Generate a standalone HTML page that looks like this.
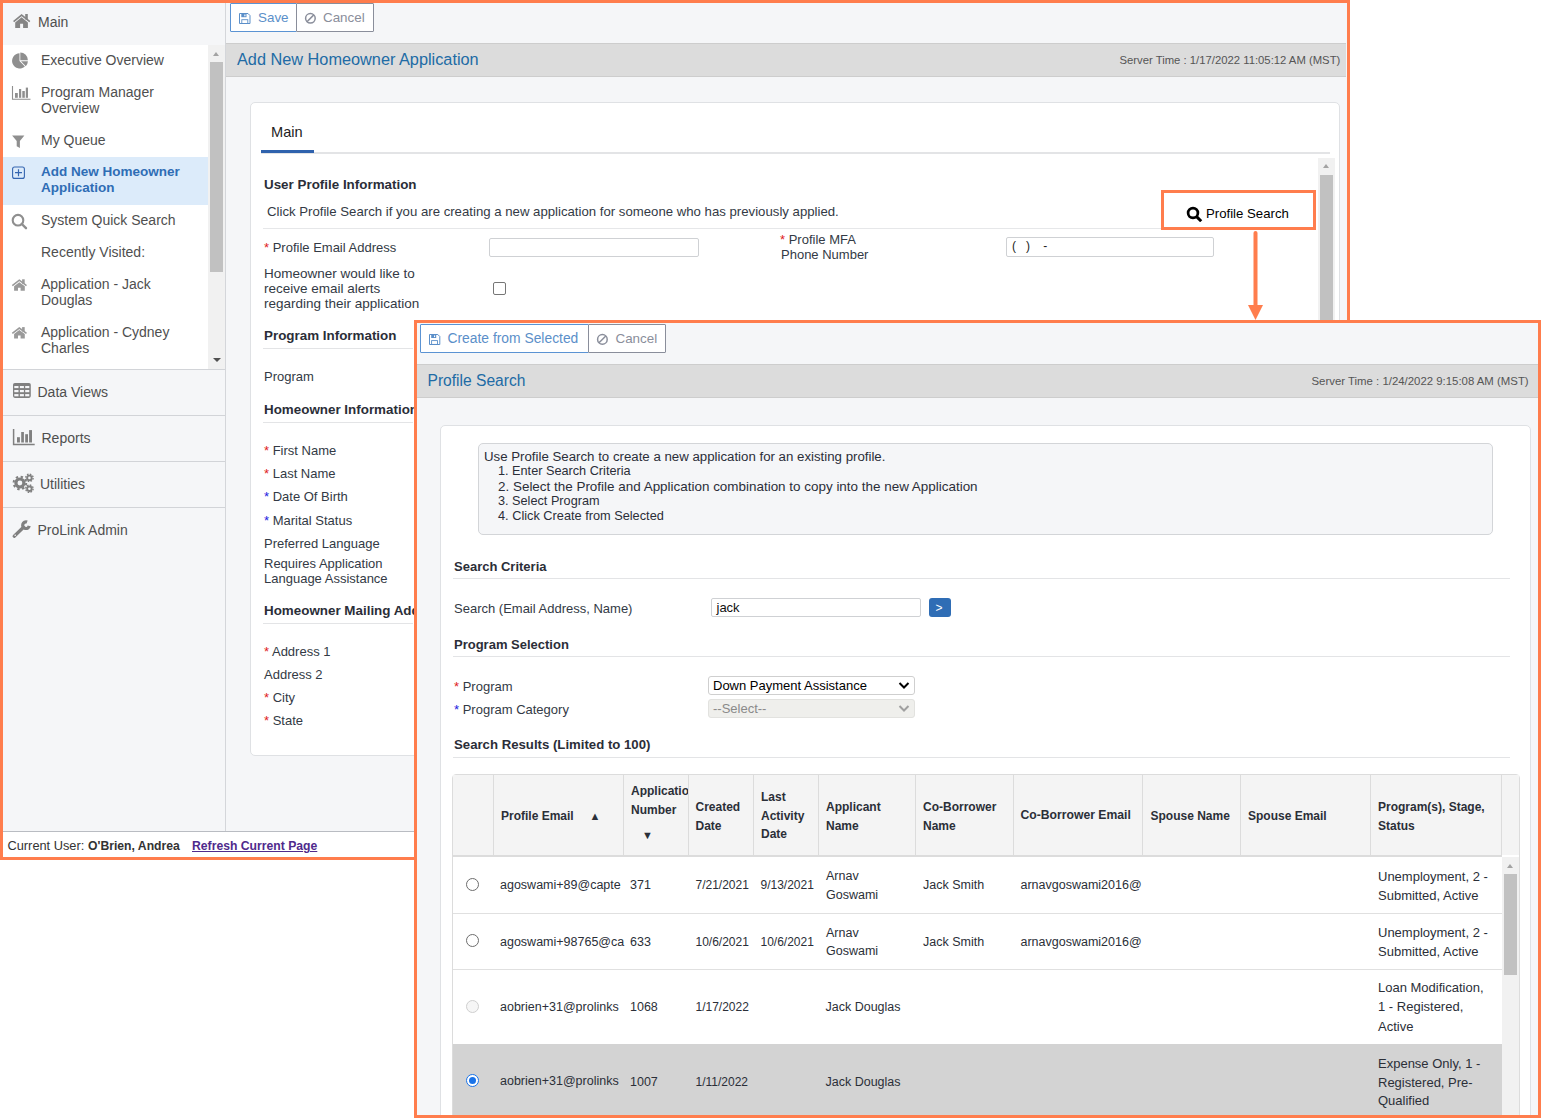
<!DOCTYPE html>
<html><head><meta charset="utf-8"><title>Profile Search</title>
<style>
html,body{margin:0;padding:0;background:#fff;}
body{width:1541px;height:1118px;position:relative;overflow:hidden;font-family:"Liberation Sans",sans-serif;}
.a{position:absolute;}
.t{white-space:nowrap;}
</style></head><body>
<div class="a" style="left:0px;top:0px;width:1350px;height:860px;background:#f5f6f8;"></div>
<div class="a" style="left:3px;top:3px;width:222px;height:42px;background:#f5f6f8;"></div>
<div class="a" style="left:3px;top:45px;width:205px;height:324px;background:#fff;"></div>
<div class="a" style="left:208px;top:45px;width:17px;height:324px;background:#f1f1f1;"></div>
<div class="a" style="left:210px;top:62px;width:13px;height:210px;background:#c1c1c1;"></div>
<div class="a" style="left:213px;top:52px;width:0;height:0;border-left:3.5px solid transparent;border-right:3.5px solid transparent;border-bottom:4px solid #a3a3a3"></div>
<div class="a" style="left:212.5px;top:358px;width:0;height:0;border-left:4px solid transparent;border-right:4px solid transparent;border-top:4.5px solid #505050"></div>
<div class="a" style="left:3px;top:157px;width:205px;height:48px;background:#dcebfa;"></div>
<div class="a" style="left:3px;top:369px;width:222px;height:1px;background:#d2d4d8;"></div>
<div class="a" style="left:3px;top:415px;width:222px;height:1px;background:#d2d4d8;"></div>
<div class="a" style="left:3px;top:461px;width:222px;height:1px;background:#d2d4d8;"></div>
<div class="a" style="left:3px;top:507px;width:222px;height:1px;background:#d2d4d8;"></div>
<div class="a" style="left:225px;top:3px;width:1px;height:828px;background:#d4d6da;"></div>
<div class="a" style="left:3px;top:831px;width:1343px;height:1px;background:#b9bcc2;"></div>
<div class="a" style="left:3px;top:832px;width:1343px;height:25px;background:#fff;"></div>
<div class="a t" style="left:38px;top:14.5px;font-size:14px;line-height:14px;font-weight:400;color:#4f4f4f;">Main</div>
<div class="a t" style="left:41px;top:52.5px;font-size:14px;line-height:14px;font-weight:400;color:#4f4f4f;">Executive Overview</div>
<div class="a t" style="left:41px;top:85.0px;font-size:14px;line-height:14px;font-weight:400;color:#4f4f4f;">Program Manager</div>
<div class="a t" style="left:41px;top:101.0px;font-size:14px;line-height:14px;font-weight:400;color:#4f4f4f;">Overview</div>
<div class="a t" style="left:41px;top:132.5px;font-size:14px;line-height:14px;font-weight:400;color:#4f4f4f;">My Queue</div>
<div class="a t" style="left:41px;top:165.1px;font-size:13.5px;line-height:13.5px;font-weight:700;color:#2f6db5;">Add New Homeowner</div>
<div class="a t" style="left:41px;top:181.1px;font-size:13.5px;line-height:13.5px;font-weight:700;color:#2f6db5;">Application</div>
<div class="a t" style="left:41px;top:213.0px;font-size:14px;line-height:14px;font-weight:400;color:#4f4f4f;">System Quick Search</div>
<div class="a t" style="left:41px;top:245.0px;font-size:14px;line-height:14px;font-weight:400;color:#4f4f4f;">Recently Visited:</div>
<div class="a t" style="left:41px;top:277.0px;font-size:14px;line-height:14px;font-weight:400;color:#4f4f4f;">Application - Jack</div>
<div class="a t" style="left:41px;top:293.0px;font-size:14px;line-height:14px;font-weight:400;color:#4f4f4f;">Douglas</div>
<div class="a t" style="left:41px;top:325.0px;font-size:14px;line-height:14px;font-weight:400;color:#4f4f4f;">Application - Cydney</div>
<div class="a t" style="left:41px;top:341.0px;font-size:14px;line-height:14px;font-weight:400;color:#4f4f4f;">Charles</div>
<div class="a t" style="left:37.5px;top:385.0px;font-size:14px;line-height:14px;font-weight:400;color:#4f4f4f;">Data Views</div>
<div class="a t" style="left:41.5px;top:431.0px;font-size:14px;line-height:14px;font-weight:400;color:#4f4f4f;">Reports</div>
<div class="a t" style="left:40px;top:477.0px;font-size:14px;line-height:14px;font-weight:400;color:#4f4f4f;">Utilities</div>
<div class="a t" style="left:37.5px;top:522.5px;font-size:14px;line-height:14px;font-weight:400;color:#4f4f4f;">ProLink Admin</div>
<div class="a t" style="left:7.5px;top:839.9px;font-size:12.8px;line-height:12.8px;font-weight:400;color:#333;">Current User:</div>
<div class="a t" style="left:88px;top:840.2px;font-size:12.2px;line-height:12.2px;font-weight:700;color:#333;">O'Brien, Andrea</div>
<div class="a t" style="left:192px;top:840.2px;font-size:12.2px;line-height:12.2px;font-weight:700;color:#4f2a8c;text-decoration:underline;">Refresh Current Page</div>
<div class="a" style="left:230px;top:3px;width:67px;height:29px;background:#fff;border:1px solid #5b93d3;box-sizing:border-box;border-radius:1px;"></div>
<div class="a" style="left:296px;top:3px;width:78px;height:29px;background:#fff;border:1px solid #8a8e9b;box-sizing:border-box;border-radius:1px;"></div>
<div class="a t" style="left:258px;top:11.3px;font-size:13.4px;line-height:13.4px;font-weight:400;color:#5b8fc9;">Save</div>
<div class="a t" style="left:323px;top:11.3px;font-size:13.4px;line-height:13.4px;font-weight:400;color:#8a8e9b;">Cancel</div>
<div class="a" style="left:226px;top:43px;width:1120px;height:34px;background:#dcdcdc;border-top:1px solid #cdcdcd;border-bottom:1px solid #cdcdcd;box-sizing:border-box;"></div>
<div class="a t" style="left:237px;top:51.4px;font-size:16.3px;line-height:16.3px;font-weight:400;color:#216ba5;">Add New Homeowner Application</div>
<div class="a t" style="left:1119.5px;top:54.6px;font-size:11.3px;line-height:11.3px;font-weight:400;color:#555;">Server Time : 1/17/2022 11:05:12 AM (MST)</div>
<div class="a" style="left:250px;top:102px;width:1090px;height:654px;background:#fff;border:1px solid #dfe1e4;box-sizing:border-box;border-radius:5px;"></div>
<div class="a t" style="left:271px;top:125.0px;font-size:14.6px;line-height:14.6px;font-weight:400;color:#222;">Main</div>
<div class="a" style="left:261px;top:152px;width:1069px;height:2px;background:#e3e4e6;"></div>
<div class="a" style="left:261px;top:150px;width:53px;height:2.5px;background:#2f62ad;"></div>
<div class="a" style="left:1318px;top:158px;width:17px;height:600px;background:#f1f1f1;"></div>
<div class="a" style="left:1320px;top:175px;width:13px;height:600px;background:#c1c1c1;"></div>
<div class="a" style="left:1323px;top:164px;width:0;height:0;border-left:3.5px solid transparent;border-right:3.5px solid transparent;border-bottom:4px solid #a3a3a3"></div>
<div class="a t" style="left:264px;top:178.3px;font-size:13.4px;line-height:13.4px;font-weight:700;color:#2b2e38;">User Profile Information</div>
<div class="a t" style="left:267px;top:204.9px;font-size:13.2px;line-height:13.2px;font-weight:400;color:#333a45;">Click Profile Search if you are creating a new application for someone who has previously applied.</div>
<div class="a" style="left:263px;top:228px;width:1050px;height:1px;background:#e6e7e9;"></div>
<div class="a t" style="left:264px;top:241.0px;font-size:13px;line-height:13px;font-weight:400;color:#333a45;"><span style="color:#e02020">*</span> Profile Email Address</div>
<div class="a" style="left:489px;top:238px;width:210px;height:19px;background:#fff;border:1px solid #cfd1d4;box-sizing:border-box;border-radius:2px;"></div>
<div class="a t" style="left:780px;top:233.0px;font-size:13px;line-height:13px;font-weight:400;color:#333a45;"><span style="color:#e02020">*</span> Profile MFA</div>
<div class="a t" style="left:781px;top:248.0px;font-size:13px;line-height:13px;font-weight:400;color:#333a45;">Phone Number</div>
<div class="a" style="left:1006px;top:237px;width:208px;height:20px;background:#fff;border:1px solid #cfd1d4;box-sizing:border-box;border-radius:2px;"></div>
<div class="a t" style="left:1012px;top:240.0px;font-size:12px;line-height:12px;font-weight:400;color:#222;">(&nbsp;&nbsp;&nbsp;)&nbsp;&nbsp;&nbsp;&nbsp;-</div>
<div class="a t" style="left:264px;top:267.1px;font-size:13.5px;line-height:13.5px;font-weight:400;color:#333a45;">Homeowner would like to</div>
<div class="a t" style="left:264px;top:282.1px;font-size:13.5px;line-height:13.5px;font-weight:400;color:#333a45;">receive email alerts</div>
<div class="a t" style="left:264px;top:297.1px;font-size:13.5px;line-height:13.5px;font-weight:400;color:#333a45;">regarding their application</div>
<div class="a" style="left:493px;top:282px;width:13px;height:13px;background:#fff;border:1px solid #767676;box-sizing:border-box;border-radius:2px;"></div>
<div class="a t" style="left:264px;top:329.3px;font-size:13.4px;line-height:13.4px;font-weight:700;color:#2b2e38;">Program Information</div>
<div class="a" style="left:263px;top:348px;width:150px;height:1px;background:#e3e4e6;"></div>
<div class="a t" style="left:264px;top:370.0px;font-size:13px;line-height:13px;font-weight:400;color:#333a45;">Program</div>
<div class="a t" style="left:264px;top:403.3px;font-size:13.4px;line-height:13.4px;font-weight:700;color:#2b2e38;">Homeowner Information</div>
<div class="a" style="left:263px;top:422px;width:150px;height:1px;background:#e3e4e6;"></div>
<div class="a t" style="left:264px;top:444.0px;font-size:13px;line-height:13px;font-weight:400;color:#333a45;"><span style="color:#e02020">*</span> First Name</div>
<div class="a t" style="left:264px;top:467.0px;font-size:13px;line-height:13px;font-weight:400;color:#333a45;"><span style="color:#e02020">*</span> Last Name</div>
<div class="a t" style="left:264px;top:490.0px;font-size:13px;line-height:13px;font-weight:400;color:#333a45;"><span style="color:#2020e0">*</span> Date Of Birth</div>
<div class="a t" style="left:264px;top:514.0px;font-size:13px;line-height:13px;font-weight:400;color:#333a45;"><span style="color:#2020e0">*</span> Marital Status</div>
<div class="a t" style="left:264px;top:537.0px;font-size:13px;line-height:13px;font-weight:400;color:#333a45;">Preferred Language</div>
<div class="a t" style="left:264px;top:557.0px;font-size:13px;line-height:13px;font-weight:400;color:#333a45;">Requires Application</div>
<div class="a t" style="left:264px;top:572.0px;font-size:13px;line-height:13px;font-weight:400;color:#333a45;">Language Assistance</div>
<div class="a t" style="left:264px;top:604.3px;font-size:13.4px;line-height:13.4px;font-weight:700;color:#2b2e38;">Homeowner Mailing Address</div>
<div class="a" style="left:263px;top:623px;width:150px;height:1px;background:#e3e4e6;"></div>
<div class="a t" style="left:264px;top:645.0px;font-size:13px;line-height:13px;font-weight:400;color:#333a45;"><span style="color:#e02020">*</span> Address 1</div>
<div class="a t" style="left:264px;top:668.0px;font-size:13px;line-height:13px;font-weight:400;color:#333a45;">Address 2</div>
<div class="a t" style="left:264px;top:691.0px;font-size:13px;line-height:13px;font-weight:400;color:#333a45;"><span style="color:#e02020">*</span> City</div>
<div class="a t" style="left:264px;top:714.0px;font-size:13px;line-height:13px;font-weight:400;color:#333a45;"><span style="color:#e02020">*</span> State</div>
<svg class="a" style="left:0;top:0" width="1541" height="1118" viewBox="0 0 1541 1118"><path d="M13.6 21.6 L21.6 15 L29.8 21.6" stroke="#858585" stroke-width="1.7" fill="none" stroke-linejoin="miter"/><path d="M15.2 22.4 L21.6 17.3 L27.9 22.4 L27.9 28 L23.1 28 L23.1 23.8 L20.1 23.8 L20.1 28 L15.2 28 Z" fill="#858585"/><rect x="25.2" y="14" width="2.6" height="5.5" fill="#858585"/><path d="M19.5 61 L19.5 53.3 A7.6 7.6 0 1 0 24.9 66.4 Z" fill="#8f8f8f"/><path d="M20.3 60.2 L20.3 52.6 A7.6 7.6 0 0 1 27.9 60.2 Z" fill="#8f8f8f"/><path d="M21 61.3 L27.9 61.3 A7.2 7.2 0 0 1 25.8 66.2 Z" fill="#8f8f8f"/><path d="M12.5 86 L12.5 99.2 L30.5 99.2" stroke="#8f8f8f" stroke-width="1.1" fill="none"/><rect x="15" y="93" width="2.8000000000000007" height="4.799999999999997" fill="#8f8f8f"/><rect x="19" y="89" width="2.1999999999999993" height="8.799999999999997" fill="#8f8f8f"/><rect x="22.3" y="91" width="2.5" height="6.799999999999997" fill="#8f8f8f"/><rect x="25.8" y="87.6" width="2.1999999999999993" height="10.200000000000003" fill="#8f8f8f"/><path d="M12.1 135.5 L24.4 135.5 L19.9 141 L19.9 148 L16.7 146.3 L16.7 141 Z" fill="#8f8f8f"/><rect x="12.6" y="167" width="11.8" height="11.4" rx="2" stroke="#3566b0" stroke-width="1.1" fill="none"/><path d="M18.5 169.2 L18.5 176.2 M15 172.7 L22 172.7" stroke="#3566b0" stroke-width="1.2"/><circle cx="18" cy="220.2" r="5.3" stroke="#8f8f8f" stroke-width="2.1" fill="none"/><path d="M21.8 224 L26 228.2" stroke="#8f8f8f" stroke-width="2.4" stroke-linecap="round"/><g transform="translate(0 0)"><path d="M12.3 285.6 L19.3 280.2 L26.5 285.6" stroke="#9a9a9a" stroke-width="1.6" fill="none"/><path d="M14.1 286.3 L19.3 282.3 L24.8 286.3 L24.8 290.8 L20.6 290.8 L20.6 287.8 L18 287.8 L18 290.8 L14.1 290.8 Z" fill="#9a9a9a"/><rect x="22.1" y="279.3" width="2.6" height="4.5" fill="#9a9a9a"/></g><g transform="translate(0 47.8)"><path d="M12.3 285.6 L19.3 280.2 L26.5 285.6" stroke="#9a9a9a" stroke-width="1.6" fill="none"/><path d="M14.1 286.3 L19.3 282.3 L24.8 286.3 L24.8 290.8 L20.6 290.8 L20.6 287.8 L18 287.8 L18 290.8 L14.1 290.8 Z" fill="#9a9a9a"/><rect x="22.1" y="279.3" width="2.6" height="4.5" fill="#9a9a9a"/></g><rect x="13" y="383" width="17.8" height="14.9" rx="1.8" fill="#808080"/><rect x="14.3" y="386" width="4.2" height="2.1" fill="#f5f6f8"/><rect x="14.3" y="390" width="4.2" height="2.2" fill="#f5f6f8"/><rect x="14.3" y="394.1" width="4.2" height="2.2" fill="#f5f6f8"/><rect x="19.9" y="386" width="4.0" height="2.1" fill="#f5f6f8"/><rect x="19.9" y="390" width="4.0" height="2.2" fill="#f5f6f8"/><rect x="19.9" y="394.1" width="4.0" height="2.2" fill="#f5f6f8"/><rect x="25.2" y="386" width="4.1" height="2.1" fill="#f5f6f8"/><rect x="25.2" y="390" width="4.1" height="2.2" fill="#f5f6f8"/><rect x="25.2" y="394.1" width="4.1" height="2.2" fill="#f5f6f8"/><path d="M13.6 429 L13.6 444.5 L34.7 444.5" stroke="#808080" stroke-width="1.5" fill="none"/><rect x="17" y="437.2" width="2.9" height="5.3" fill="#808080"/><rect x="21.2" y="432" width="2.7" height="10.5" fill="#808080"/><rect x="25.2" y="434.2" width="2.8" height="8.3" fill="#808080"/><rect x="29.1" y="430.1" width="2.9" height="12.4" fill="#808080"/><circle cx="19.9" cy="483" r="5.6" fill="#808080"/><circle cx="19.9" cy="483" r="6.3" stroke="#808080" stroke-width="2" fill="none" stroke-dasharray="2.4 2.55"/><circle cx="19.9" cy="483" r="2.4" fill="#f5f6f8"/><circle cx="29.4" cy="477.9" r="3.2" fill="#808080"/><circle cx="29.4" cy="477.9" r="3.7" stroke="#808080" stroke-width="1.4" fill="none" stroke-dasharray="1.6 1.3"/><circle cx="29.4" cy="477.9" r="1.3" fill="#f5f6f8"/><circle cx="29.4" cy="488.7" r="3.2" fill="#808080"/><circle cx="29.4" cy="488.7" r="3.7" stroke="#808080" stroke-width="1.4" fill="none" stroke-dasharray="1.6 1.3"/><circle cx="29.4" cy="488.7" r="1.3" fill="#f5f6f8"/><path d="M14.2 536.2 L23.5 527.3" stroke="#808080" stroke-width="3.3" stroke-linecap="round"/><path d="M27.1 522.1 A3.3 3.3 0 1 0 29.2 525.9" stroke="#808080" stroke-width="3.2" fill="none"/><circle cx="15.2" cy="535.3" r="0.8" fill="#f5f6f8"/><path d="M239.5 13.5 L248 13.5 L250 15.6 L250 23.5 L239.5 23.5 Z" stroke="#5b8fc9" stroke-width="1" fill="none"/><rect x="241.3" y="14" width="5.2" height="3.2" fill="#5b8fc9"/><rect x="244.3" y="14.5" width="1.2" height="1.8" fill="#fff"/><rect x="241.8" y="19.7" width="6" height="3.8" stroke="#5b8fc9" stroke-width="0.9" fill="none"/><circle cx="310.4" cy="18.3" r="4.8" stroke="#8a8e9b" stroke-width="1.5" fill="none"/><path d="M313.8 14.9 L307 21.7" stroke="#8a8e9b" stroke-width="1.5"/></svg>
<div class="a" style="left:0px;top:0px;width:1350px;height:860px;border:3px solid #ff7d4d;box-sizing:border-box;"></div>
<div class="a" style="left:414px;top:320px;width:1127px;height:798px;background:#f5f6f8;"></div>
<div class="a" style="left:420px;top:324px;width:169px;height:29px;background:#fff;border:1px solid #5b93d3;box-sizing:border-box;border-radius:1px;"></div>
<div class="a" style="left:588px;top:324px;width:78px;height:29px;background:#fff;border:1px solid #8a8e9b;box-sizing:border-box;border-radius:1px;"></div>
<div class="a t" style="left:447.5px;top:332.1px;font-size:13.85px;line-height:13.85px;font-weight:400;color:#5b8fc9;">Create from Selected</div>
<div class="a t" style="left:615.5px;top:332.3px;font-size:13.4px;line-height:13.4px;font-weight:400;color:#8a8e9b;">Cancel</div>
<div class="a" style="left:417px;top:364px;width:1121px;height:34px;background:#dcdcdc;border-top:1px solid #cdcdcd;border-bottom:1px solid #cdcdcd;box-sizing:border-box;"></div>
<div class="a t" style="left:427.5px;top:372.7px;font-size:15.6px;line-height:15.6px;font-weight:400;color:#216ba5;">Profile Search</div>
<div class="a t" style="left:1311.5px;top:376.0px;font-size:11.4px;line-height:11.4px;font-weight:400;color:#555;">Server Time : 1/24/2022 9:15:08 AM (MST)</div>
<div class="a" style="left:440px;top:425px;width:1091px;height:720px;background:#fff;border:1px solid #dfe1e4;box-sizing:border-box;border-radius:5px;"></div>
<div class="a" style="left:478px;top:443px;width:1015px;height:92px;background:#f5f6f8;border:1px solid #d3d5d8;box-sizing:border-box;border-radius:5px;"></div>
<div class="a t" style="left:484px;top:449.9px;font-size:13.25px;line-height:13.25px;font-weight:400;color:#2b2e38;">Use Profile Search to create a new application for an existing profile.</div>
<div class="a t" style="left:498px;top:465.1px;font-size:12.7px;line-height:12.7px;font-weight:400;color:#2b2e38;">1. Enter Search Criteria</div>
<div class="a t" style="left:498px;top:479.8px;font-size:13.45px;line-height:13.45px;font-weight:400;color:#2b2e38;">2. Select the Profile and Application combination to copy into the new Application</div>
<div class="a t" style="left:498px;top:495.1px;font-size:12.7px;line-height:12.7px;font-weight:400;color:#2b2e38;">3. Select Program</div>
<div class="a t" style="left:498px;top:510.1px;font-size:12.75px;line-height:12.75px;font-weight:400;color:#2b2e38;">4. Click Create from Selected</div>
<div class="a t" style="left:454px;top:559.5px;font-size:13px;line-height:13px;font-weight:700;color:#2b2e38;">Search Criteria</div>
<div class="a" style="left:453px;top:578px;width:1057px;height:1px;background:#e3e4e6;"></div>
<div class="a t" style="left:454px;top:601.5px;font-size:13px;line-height:13px;font-weight:400;color:#333a45;">Search (Email Address, Name)</div>
<div class="a" style="left:711px;top:598px;width:210px;height:19px;background:#fff;border:1px solid #cfd1d4;box-sizing:border-box;border-radius:2px;"></div>
<div class="a t" style="left:716.5px;top:601.0px;font-size:13px;line-height:13px;font-weight:400;color:#111;">jack</div>
<div class="a" style="left:929px;top:598px;width:22px;height:19px;background:#2f6db5;border-radius:3px;"></div>
<div class="a t" style="left:935.5px;top:601.5px;font-size:12px;line-height:12px;font-weight:400;color:#fff;">&gt;</div>
<div class="a t" style="left:454px;top:637.5px;font-size:13px;line-height:13px;font-weight:700;color:#2b2e38;">Program Selection</div>
<div class="a" style="left:453px;top:656px;width:1057px;height:1px;background:#e3e4e6;"></div>
<div class="a t" style="left:454px;top:680.0px;font-size:13px;line-height:13px;font-weight:400;color:#333a45;"><span style="color:#e02020">*</span> Program</div>
<div class="a" style="left:708px;top:676px;width:207px;height:19px;background:#fff;border:1px solid #cfcfcf;box-sizing:border-box;border-radius:3px;"></div>
<div class="a t" style="left:713px;top:679.0px;font-size:13px;line-height:13px;font-weight:400;color:#000;">Down Payment Assistance</div>
<div class="a t" style="left:454px;top:703.0px;font-size:13px;line-height:13px;font-weight:400;color:#333a45;"><span style="color:#2020e0">*</span> Program Category</div>
<div class="a" style="left:708px;top:699px;width:207px;height:19px;background:#efefec;border:1px solid #e2e2df;box-sizing:border-box;border-radius:3px;"></div>
<div class="a t" style="left:713px;top:702.0px;font-size:13px;line-height:13px;font-weight:400;color:#8a8a8a;">--Select--</div>
<svg class="a" style="left:898px;top:681px" width="12" height="9" viewBox="0 0 12 9"><path d="M1.5 2 L6 6.5 L10.5 2" stroke="#000" stroke-width="2" fill="none"/></svg>
<svg class="a" style="left:898px;top:704px" width="12" height="9" viewBox="0 0 12 9"><path d="M1.5 2 L6 6.5 L10.5 2" stroke="#a0a0a0" stroke-width="2" fill="none"/></svg>
<div class="a t" style="left:454px;top:738.4px;font-size:13.2px;line-height:13.2px;font-weight:700;color:#2b2e38;">Search Results (Limited to 100)</div>
<div class="a" style="left:453px;top:757px;width:1057px;height:1px;background:#e3e4e6;"></div>
<div class="a" style="left:452px;top:774px;width:1068px;height:400px;background:#fff;border:1px solid #dcdcdc;box-sizing:border-box;border-radius:4px;"></div>
<div class="a" style="left:453px;top:775px;width:1066px;height:80px;background:#f4f4f4;"></div>
<div class="a" style="left:453px;top:855px;width:1049px;height:2px;background:#dcdcdc;"></div>
<div class="a" style="left:493px;top:775px;width:1px;height:80px;background:#dcdcdc;"></div>
<div class="a" style="left:623px;top:775px;width:1px;height:80px;background:#dcdcdc;"></div>
<div class="a" style="left:688px;top:775px;width:1px;height:80px;background:#dcdcdc;"></div>
<div class="a" style="left:753px;top:775px;width:1px;height:80px;background:#dcdcdc;"></div>
<div class="a" style="left:818px;top:775px;width:1px;height:80px;background:#dcdcdc;"></div>
<div class="a" style="left:915px;top:775px;width:1px;height:80px;background:#dcdcdc;"></div>
<div class="a" style="left:1013px;top:775px;width:1px;height:80px;background:#dcdcdc;"></div>
<div class="a" style="left:1142px;top:775px;width:1px;height:80px;background:#dcdcdc;"></div>
<div class="a" style="left:1240px;top:775px;width:1px;height:80px;background:#dcdcdc;"></div>
<div class="a" style="left:1370px;top:775px;width:1px;height:80px;background:#dcdcdc;"></div>
<div class="a" style="left:1501px;top:775px;width:1px;height:80px;background:#dcdcdc;"></div>
<div class="a t" style="left:501px;top:809.5px;font-size:12px;line-height:12px;font-weight:700;color:#2b2f38;">Profile Email</div>
<div class="a t" style="left:589.5px;top:810.5px;font-size:11px;line-height:11px;font-weight:400;color:#2b2f38;">&#9650;</div>
<div class="a t" style="left:631px;top:785.0px;font-size:12px;line-height:12px;font-weight:700;color:#2b2f38;width:56.5px;overflow:hidden;">Application</div>
<div class="a t" style="left:631px;top:803.5px;font-size:12px;line-height:12px;font-weight:700;color:#2b2f38;">Number</div>
<div class="a t" style="left:642px;top:829.5px;font-size:11px;line-height:11px;font-weight:400;color:#2b2f38;">&#9660;</div>
<div class="a t" style="left:695.5px;top:800.5px;font-size:12px;line-height:12px;font-weight:700;color:#2b2f38;">Created</div>
<div class="a t" style="left:695.5px;top:819.5px;font-size:12px;line-height:12px;font-weight:700;color:#2b2f38;">Date</div>
<div class="a t" style="left:761px;top:791.0px;font-size:12px;line-height:12px;font-weight:700;color:#2b2f38;">Last</div>
<div class="a t" style="left:761px;top:809.5px;font-size:12px;line-height:12px;font-weight:700;color:#2b2f38;">Activity</div>
<div class="a t" style="left:761px;top:828.0px;font-size:12px;line-height:12px;font-weight:700;color:#2b2f38;">Date</div>
<div class="a t" style="left:826px;top:800.5px;font-size:12px;line-height:12px;font-weight:700;color:#2b2f38;">Applicant</div>
<div class="a t" style="left:826px;top:819.5px;font-size:12px;line-height:12px;font-weight:700;color:#2b2f38;">Name</div>
<div class="a t" style="left:923px;top:800.5px;font-size:12px;line-height:12px;font-weight:700;color:#2b2f38;">Co-Borrower</div>
<div class="a t" style="left:923px;top:819.5px;font-size:12px;line-height:12px;font-weight:700;color:#2b2f38;">Name</div>
<div class="a t" style="left:1020.5px;top:809.4px;font-size:12.2px;line-height:12.2px;font-weight:700;color:#2b2f38;">Co-Borrower Email</div>
<div class="a t" style="left:1150.5px;top:809.5px;font-size:12px;line-height:12px;font-weight:700;color:#2b2f38;">Spouse Name</div>
<div class="a t" style="left:1248px;top:809.5px;font-size:12px;line-height:12px;font-weight:700;color:#2b2f38;">Spouse Email</div>
<div class="a t" style="left:1378px;top:800.5px;font-size:12px;line-height:12px;font-weight:700;color:#2b2f38;">Program(s), Stage,</div>
<div class="a t" style="left:1378px;top:819.5px;font-size:12px;line-height:12px;font-weight:700;color:#2b2f38;">Status</div>
<div class="a" style="left:453px;top:913px;width:1049px;height:1px;background:#e0e0e0;"></div>
<div class="a" style="left:453px;top:969px;width:1049px;height:1px;background:#e0e0e0;"></div>
<div class="a" style="left:453px;top:1044px;width:1049px;height:80px;background:#d3d3d3;"></div>
<div class="a" style="left:1502px;top:857px;width:17px;height:300px;background:#f1f1f1;"></div>
<div class="a" style="left:1504px;top:874px;width:13px;height:101px;background:#c1c1c1;"></div>
<div class="a" style="left:1507px;top:864px;width:0;height:0;border-left:3.5px solid transparent;border-right:3.5px solid transparent;border-bottom:4px solid #a3a3a3"></div>
<div class="a" style="left:466.0px;top:878.0px;width:13px;height:13px;border:1px solid #6d6d6d;box-sizing:border-box;border-radius:50%;background:#fff"></div>
<div class="a" style="left:466.0px;top:934.0px;width:13px;height:13px;border:1px solid #6d6d6d;box-sizing:border-box;border-radius:50%;background:#fff"></div>
<div class="a" style="left:466.0px;top:999.5px;width:13px;height:13px;border:1px solid #cfcfcf;box-sizing:border-box;border-radius:50%;background:#f6f6f6"></div>
<div class="a" style="left:466.0px;top:1074.0px;width:13px;height:13px;border:1px solid #1a73e8;box-sizing:border-box;border-radius:50%;background:#fff"></div>
<div class="a" style="left:469.0px;top:1077.0px;width:7px;height:7px;border-radius:50%;background:#1a73e8"></div>
<div class="a t" style="left:500px;top:879.0px;font-size:12.5px;line-height:12.5px;font-weight:400;color:#2b2f38;">agoswami+89@capte</div>
<div class="a t" style="left:500px;top:935.5px;font-size:12.5px;line-height:12.5px;font-weight:400;color:#2b2f38;">agoswami+98765@ca</div>
<div class="a t" style="left:500px;top:1000.5px;font-size:12.5px;line-height:12.5px;font-weight:400;color:#2b2f38;width:123px;overflow:hidden;">aobrien+31@prolinks</div>
<div class="a t" style="left:500px;top:1075.0px;font-size:12.5px;line-height:12.5px;font-weight:400;color:#2b2f38;width:123px;overflow:hidden;">aobrien+31@prolinks</div>
<div class="a t" style="left:630px;top:879.0px;font-size:12.5px;line-height:12.5px;font-weight:400;color:#2b2f38;">371</div>
<div class="a t" style="left:630px;top:935.5px;font-size:12.5px;line-height:12.5px;font-weight:400;color:#2b2f38;">633</div>
<div class="a t" style="left:630px;top:1000.5px;font-size:12.5px;line-height:12.5px;font-weight:400;color:#2b2f38;">1068</div>
<div class="a t" style="left:630px;top:1075.5px;font-size:12.5px;line-height:12.5px;font-weight:400;color:#2b2f38;">1007</div>
<div class="a t" style="left:695.5px;top:879.3px;font-size:12px;line-height:12px;font-weight:400;color:#2b2f38;">7/21/2021</div>
<div class="a t" style="left:695.5px;top:935.8px;font-size:12px;line-height:12px;font-weight:400;color:#2b2f38;">10/6/2021</div>
<div class="a t" style="left:695.5px;top:1000.8px;font-size:12px;line-height:12px;font-weight:400;color:#2b2f38;">1/17/2022</div>
<div class="a t" style="left:695.5px;top:1075.8px;font-size:12px;line-height:12px;font-weight:400;color:#2b2f38;">1/11/2022</div>
<div class="a t" style="left:760.5px;top:879.3px;font-size:12px;line-height:12px;font-weight:400;color:#2b2f38;">9/13/2021</div>
<div class="a t" style="left:760.5px;top:935.8px;font-size:12px;line-height:12px;font-weight:400;color:#2b2f38;">10/6/2021</div>
<div class="a t" style="left:826px;top:870.0px;font-size:12.5px;line-height:12.5px;font-weight:400;color:#2b2f38;">Arnav</div>
<div class="a t" style="left:826px;top:889.0px;font-size:12.5px;line-height:12.5px;font-weight:400;color:#2b2f38;">Goswami</div>
<div class="a t" style="left:826px;top:926.5px;font-size:12.5px;line-height:12.5px;font-weight:400;color:#2b2f38;">Arnav</div>
<div class="a t" style="left:826px;top:945.0px;font-size:12.5px;line-height:12.5px;font-weight:400;color:#2b2f38;">Goswami</div>
<div class="a t" style="left:825.5px;top:1000.5px;font-size:12.5px;line-height:12.5px;font-weight:400;color:#2b2f38;">Jack Douglas</div>
<div class="a t" style="left:825.5px;top:1075.5px;font-size:12.5px;line-height:12.5px;font-weight:400;color:#2b2f38;">Jack Douglas</div>
<div class="a t" style="left:923px;top:879.0px;font-size:12.5px;line-height:12.5px;font-weight:400;color:#2b2f38;">Jack Smith</div>
<div class="a t" style="left:923px;top:935.5px;font-size:12.5px;line-height:12.5px;font-weight:400;color:#2b2f38;">Jack Smith</div>
<div class="a t" style="left:1020.5px;top:879.0px;font-size:12.5px;line-height:12.5px;font-weight:400;color:#2b2f38;">arnavgoswami2016@</div>
<div class="a t" style="left:1020.5px;top:935.5px;font-size:12.5px;line-height:12.5px;font-weight:400;color:#2b2f38;">arnavgoswami2016@</div>
<div class="a t" style="left:1378px;top:869.8px;font-size:13px;line-height:13px;font-weight:400;color:#2b2f38;">Unemployment, 2 -</div>
<div class="a t" style="left:1378px;top:888.8px;font-size:13px;line-height:13px;font-weight:400;color:#2b2f38;">Submitted, Active</div>
<div class="a t" style="left:1378px;top:926.3px;font-size:13px;line-height:13px;font-weight:400;color:#2b2f38;">Unemployment, 2 -</div>
<div class="a t" style="left:1378px;top:944.8px;font-size:13px;line-height:13px;font-weight:400;color:#2b2f38;">Submitted, Active</div>
<div class="a t" style="left:1378px;top:981.3px;font-size:13px;line-height:13px;font-weight:400;color:#2b2f38;">Loan Modification,</div>
<div class="a t" style="left:1378px;top:1000.3px;font-size:13px;line-height:13px;font-weight:400;color:#2b2f38;">1 - Registered,</div>
<div class="a t" style="left:1378px;top:1019.8px;font-size:13px;line-height:13px;font-weight:400;color:#2b2f38;">Active</div>
<div class="a t" style="left:1378px;top:1057.3px;font-size:13px;line-height:13px;font-weight:400;color:#2b2f38;">Expense Only, 1 -</div>
<div class="a t" style="left:1378px;top:1075.8px;font-size:13px;line-height:13px;font-weight:400;color:#2b2f38;">Registered, Pre-</div>
<div class="a t" style="left:1378px;top:1093.8px;font-size:13px;line-height:13px;font-weight:400;color:#2b2f38;">Qualified</div>
<svg class="a" style="left:0;top:0" width="1541" height="1118" viewBox="0 0 1541 1118"><path d="M429.5 334.5 L437.8 334.5 L439.8 336.5 L439.8 344.5 L429.5 344.5 Z" stroke="#5b8fc9" stroke-width="1" fill="none"/><rect x="431.2" y="335" width="5" height="3" fill="#5b8fc9"/><rect x="434" y="335.4" width="1.1" height="1.7" fill="#fff"/><rect x="431.6" y="340.6" width="5.9" height="3.8" stroke="#5b8fc9" stroke-width="0.9" fill="none"/><circle cx="602.4" cy="339.4" r="4.8" stroke="#8a8e9b" stroke-width="1.5" fill="none"/><path d="M605.8 336 L599 342.8" stroke="#8a8e9b" stroke-width="1.5"/></svg>
<div class="a" style="left:414px;top:320px;width:1127px;height:798px;border:3px solid #ff7d4d;box-sizing:border-box;"></div>
<div class="a" style="left:1161px;top:190px;width:155px;height:40px;background:#fff;border:3px solid #ff7d4d;box-sizing:border-box;"></div>
<div class="a t" style="left:1206px;top:207.4px;font-size:13.2px;line-height:13.2px;font-weight:400;color:#000;">Profile Search</div>
<svg class="a" style="left:1185px;top:205px" width="18" height="17" viewBox="0 0 18 17"><circle cx="8" cy="8" r="4.9" stroke="#000" stroke-width="2.7" fill="none"/><path d="M11.6 11.6 L16.2 16.2" stroke="#000" stroke-width="3" stroke-linecap="butt"/></svg>
<svg class="a" style="left:1240px;top:228px" width="32" height="96" viewBox="0 0 32 96"><path d="M15.5 5 L15.5 80" stroke="#ff7d4d" stroke-width="4" stroke-linecap="round"/><path d="M8 77 L23 77 L15.5 92 Z" fill="#ff7d4d"/></svg>
</body></html>
